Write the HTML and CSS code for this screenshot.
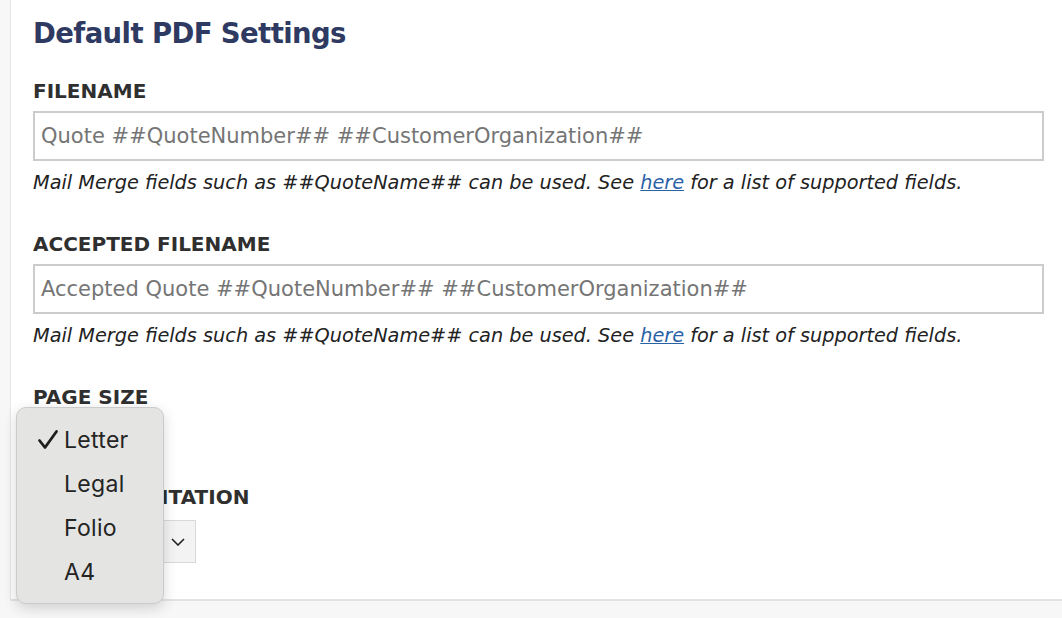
FILE: index.html
```html
<!DOCTYPE html>
<html>
<head>
<meta charset="utf-8">
<title>Default PDF Settings</title>
<link rel="stylesheet" href="styles.css">
</head>
<body>
<div class="panel">
  <h1 class="title">Default PDF Settings</h1>

  <div class="field">
    <div class="label">FILENAME</div>
    <div class="input"><span class="placeholder">Quote ##QuoteNumber## ##CustomerOrganization##</span></div>
    <div class="help">Mail Merge fields such as ##QuoteName## can be used. See <a href="#">here</a> for a list of supported fields.</div>
  </div>

  <div class="field">
    <div class="label">ACCEPTED FILENAME</div>
    <div class="input"><span class="placeholder">Accepted Quote ##QuoteNumber## ##CustomerOrganization##</span></div>
    <div class="help">Mail Merge fields such as ##QuoteName## can be used. See <a href="#">here</a> for a list of supported fields.</div>
  </div>

  <div class="field field-select">
    <div class="label">PAGE SIZE</div>
    <div class="select select-size"><span class="select-text">Letter</span><svg class="chev" viewBox="0 0 14 8" width="14" height="8"><path d="M1 1 L7 7 L13 1" fill="none" stroke="#222" stroke-width="1.6"/></svg></div>
  </div>

  <div class="field field-select">
    <div class="label">PAGE ORIENTATION</div>
    <div class="select select-orient"><span class="select-text">Portrait</span><svg class="chev" viewBox="0 0 14 8" width="14" height="8"><path d="M1 1 L7 7 L13 1" fill="none" stroke="#222" stroke-width="1.6"/></svg></div>
  </div>
</div>

<div class="menu">
  <div class="menu-item checked"><svg class="check" viewBox="0 0 22 22" width="22" height="22"><path d="M2.5 11.5 L8 18.5 L19.5 2.5" fill="none" stroke="#1f1f1f" stroke-width="2.8" stroke-linecap="round" stroke-linejoin="round"/></svg>Letter</div>
  <div class="menu-item">Legal</div>
  <div class="menu-item">Folio</div>
  <div class="menu-item">A4</div>
</div>
</body>
</html>
```

FILE: styles.css
```css
html, body {
  margin: 0;
  padding: 0;
}
body {
  background: #f7f7f7;
  font-family: "DejaVu Sans", Verdana, sans-serif;
  color: #222;
  height: 618px;
  overflow: hidden;
}
.panel {
  margin-left: 10px;
  background: #fff;
  border-left: 1px solid #e6e6e6;
  border-bottom: 2px solid #e3e3e3;
  height: 601px;
  box-sizing: border-box;
  padding: 16px 18px 0 22px;
}
.title {
  margin: 0 0 29px 0;
  font-size: 27.5px;
  letter-spacing: -0.6px;
  line-height: 34px;
  font-weight: bold;
  color: #2e3a62;
}
.field {
  margin-bottom: 36px;
}
.label {
  font-size: 20px;
  font-weight: bold;
  color: #2f2f2f;
  line-height: 24px;
  margin-bottom: 8px;
}
.input {
  height: 50px;
  box-sizing: border-box;
  border: 2px solid #cccccc;
  padding: 0 6px;
  display: flex;
  align-items: center;
  background: #fff;
}
.placeholder {
  font-size: 21px;
  color: #757575;
}
.help {
  margin-top: 9px;
  font-size: 19.3px;
  font-style: italic;
  color: #222;
  line-height: 26px;
}
.help a {
  color: #2a62a8;
}
.field-select {
  margin-bottom: 22px;
}
.field-select .label {
  margin-bottom: 11px;
}
.select {
  height: 43px;
  box-sizing: border-box;
  border: 1px solid #d9d9d9;
  background: #f3f3f3;
  display: flex;
  align-items: center;
  justify-content: space-between;
  padding: 0 10px 0 10px;
  font-size: 18px;
}
.select-size {
  width: 115px;
}
.select-orient {
  width: 163px;
}
.menu {
  position: absolute;
  left: 16px;
  top: 407px;
  width: 148px;
  height: 197px;
  box-sizing: border-box;
  background: #e4e4e3;
  border: 1px solid #cbcbcb;
  border-radius: 10px;
  box-shadow: 0 4px 14px rgba(0, 0, 0, 0.16);
  padding-top: 10px;
  font-family: Inter, "Noto Sans", sans-serif;
}
.menu-item {
  height: 44px;
  line-height: 44px;
  font-size: 23px;
  letter-spacing: 0.3px;
  color: #242424;
  padding-left: 47px;
  position: relative;
}
.check {
  position: absolute;
  left: 20px;
  top: 11px;
}
```
